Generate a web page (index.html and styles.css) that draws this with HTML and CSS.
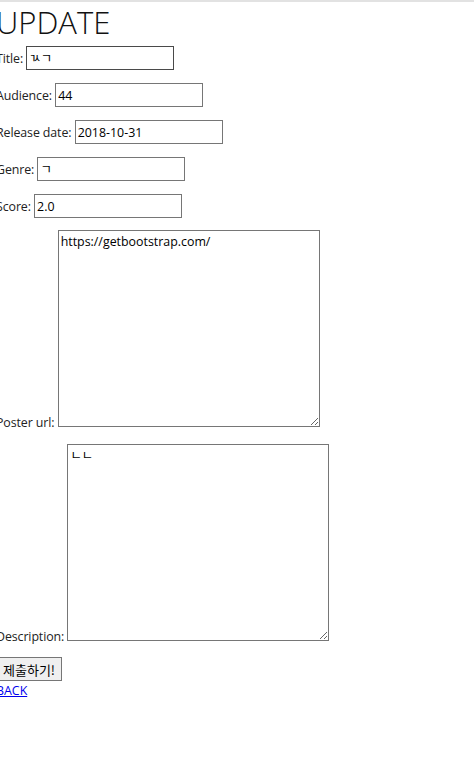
FILE: index.html
```html
<!DOCTYPE html>
<html lang="ko">
<head>
<meta charset="utf-8">
<title>UPDATE</title>
<link rel="stylesheet" href="styles.css">
</head>
<body>
<div class="page">
  <h1 class="title">UPDATE</h1>
  <form class="form">
    <p class="row"><label class="label">Title:</label> <input class="field field-hover" type="text" value="ㄳㄱ"></p>
    <p class="row"><label class="label">Audience:</label> <input class="field" type="text" value="44"></p>
    <p class="row"><label class="label">Release date:</label> <input class="field" type="text" value="2018-10-31"></p>
    <p class="row"><label class="label">Genre:</label> <input class="field" type="text" value="ㄱ"></p>
    <p class="row"><label class="label">Score:</label> <input class="field" type="text" value="2.0"></p>
    <p class="row row-area row-poster"><label class="label">Poster url:</label> <textarea class="area">https://getbootstrap.com/</textarea></p>
    <p class="row row-area"><label class="label">Description:</label> <textarea class="area">ㄴㄴ</textarea></p>
    <button class="submit" type="button">제출하기!</button>
  </form>
  <a class="back" href="#">BACK</a>
</div>
</body>
</html>
```
FILE: styles.css
```css
html, body {
  margin: 0;
  padding: 0;
  background: #ffffff;
}
body {
  border-top: 2px solid #e2e2e2;
  font-family: "Open Sans", "Noto Sans CJK KR", sans-serif;
  color: #000000;
}
.page {
  margin-left: -4px;
}
.title {
  margin: 0 0 3px;
  font-size: 31px;
  font-weight: 300;
  line-height: 41px;
  color: #111111;
}
.form {
  display: flex;
  flex-direction: column;
  align-items: flex-start;
  gap: 13px;
  margin: 0;
}
.row {
  margin: 0;
  font-size: 12.4px;
  color: #222222;
}
.label {
  letter-spacing: -0.1px;
}
.row-area {
  line-height: 14px;
}
.row-poster {
  margin-top: -1px;
  padding-bottom: 1px;
}
.field {
  box-sizing: border-box;
  width: 148px;
  height: 24px;
  margin: 0;
  padding: 1px 2px;
  border: 1px solid #767676;
  border-radius: 0;
  font-family: "Open Sans", "Noto Sans CJK KR", sans-serif;
  font-size: 12.4px;
  color: #000000;
  background: #ffffff;
}
.field-hover {
  border-color: #4a4a4a;
}
.area {
  box-sizing: border-box;
  width: 262px;
  height: 197px;
  margin: 0;
  padding: 2px;
  border: 1px solid #767676;
  border-radius: 0;
  font-family: "Open Sans", "Noto Sans CJK KR", sans-serif;
  font-size: 12.4px;
  line-height: 17px;
  color: #000000;
  background: #ffffff;
}
.submit {
  box-sizing: border-box;
  height: 24px;
  margin: 0;
  padding: 1px 6px;
  border: 1px solid #767676;
  border-radius: 0;
  background: #efefef;
  font-family: "Noto Sans CJK KR", sans-serif;
  font-size: 13px;
  color: #000000;
}
.back {
  display: block;
  font-size: 12.4px;
  line-height: 20px;
  color: #0000ee;
}
```
